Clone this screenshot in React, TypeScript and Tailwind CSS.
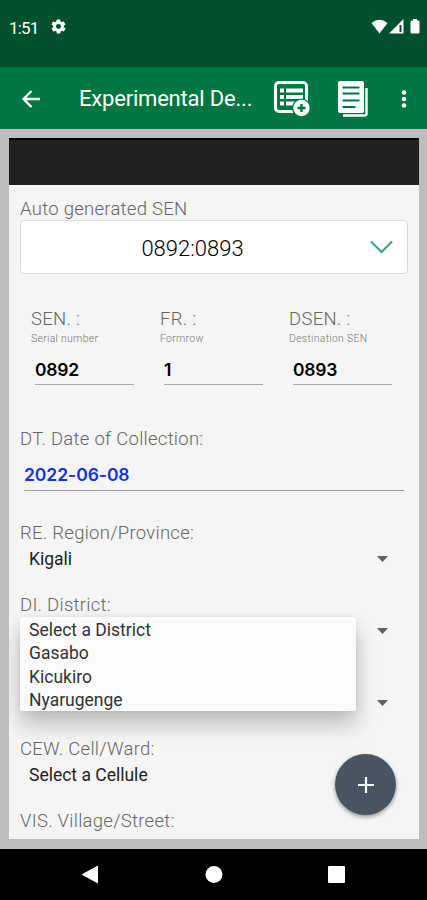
import type { ReactNode } from "react";

const DISTRICTS = ["Select a District", "Gasabo", "Kicukiro", "Nyarugenge"];

const SERIALS = [
  { label: "SEN. :", hint: "Serial number", value: "0892" },
  { label: "FR. :", hint: "Formrow", value: "1" },
  { label: "DSEN. :", hint: "Destination SEN", value: "0893" },
];

function StatusBar() {
  return (
    <div className="flex h-[67px] shrink-0 items-start bg-[#00502b] pl-[9px] pr-[7px] pt-[18px] text-white">
      <span className="h-5 w-[29px] text-[17px] leading-5 tracking-[-0.8px]">1:51</span>
      <svg className="ml-[12px]" width="17" height="17" viewBox="0 0 24 24" fill="currentColor">
        <path d="M19.400 13c0-.3.1-.6.1-1s0-.7-.1-1l2.100-1.600c.2-.2.3-.4.1-.7l-2-3.400c-.1-.2-.4-.3-.6-.2l-2.500 1c-.5-.4-1.100-.7-1.700-1l-.4-2.600c0-.3-.2-.5-.5-.5h-4c-.2 0-.4.2-.5.400l-.4 2.700c-.6.200-1.100.6-1.700 1l-2.500-1c-.2-.1-.5 0-.6.2l-2 3.400c-.1.200-.1.500.1.700L4.600 11c0 .300-.1.600-.1 1s0 .7.1 1l-2.100 1.600c-.2.200-.3.400-.1.700l2 3.400c.1.200.4.300.6.200l2.500-1c.5.400 1.100.7 1.700 1l.4 2.600c0 .300.2.500.5.500h4c.2 0 .5-.2.5-.4l.4-2.700c.6-.2 1.100-.6 1.700-1l2.500 1c.2.100.5 0 .6-.2l2-3.400c.1-.2.1-.5-.1-.7L19.400 13zM12 15.500A3.500 3.500 0 1 1 12 8.500a3.500 3.500 0 0 1 0 7z" />
      </svg>
      <div className="ml-auto mt-[1px] flex items-center">
        <svg width="17" height="15" viewBox="0 0 17 15" fill="currentColor">
          <path d="M.5 4Q8.500-2.500 16.500 4L8.500 14.500z" />
        </svg>
        <svg className="ml-[1px]" width="15" height="15" viewBox="0 0 15 15">
          <path d="M0 14.500 14.500 0v14.500z" fill="currentColor" />
          <path d="M10.500 6h2v7h-2z" fill="#00502b" />
        </svg>
        <svg className="ml-[6px]" width="10" height="15" viewBox="0 0 10 15" fill="currentColor">
          <path d="M3 0h4v1.500h1.500q1 0 1 1v11q0 1-1 1h-7q-1 0-1-1v-11q0-1 1-1H3z" />
        </svg>
      </div>
    </div>
  );
}

function AppBar() {
  return (
    <div className="flex h-[62px] shrink-0 items-center bg-[#007740] pl-[21px] pr-[20px] text-white">
      <svg className="mt-[1px]" width="20" height="20" viewBox="0 0 20 20" fill="none" stroke="currentColor" strokeWidth="2.300">
        <path d="M19 10H3M10.500 2 2.500 10l8 8" />
      </svg>
      <h1 className="ml-[38px] mt-[1px] w-[195px] whitespace-nowrap text-[22px] leading-7 tracking-[-0.2px]">Experimental De...</h1>
      <svg className="mt-[2px]" width="36" height="36" viewBox="0 0 36 36" fill="none">
        <rect x="1.500" y="1.500" width="31" height="29" rx="3.500" stroke="white" strokeWidth="3" />
        <path d="M6 7.500h4v4H6zm6 0h17v4H12zM6 14h4v4H6zm6 0h17v4H12zM6 20.500h4v4H6zm6 0h11v4H12z" fill="white" />
        <circle cx="27.500" cy="27" r="9.500" fill="#007740" />
        <circle cx="27.500" cy="27" r="8.200" fill="white" />
        <path d="M27.500 23v8M23.500 27h8" stroke="#007740" strokeWidth="2.400" />
      </svg>
      <svg className="ml-[28px] mt-[1px]" width="30" height="36" viewBox="0 0 30 36" fill="none">
        <path d="M28.500 7v25.500q0 2-2 2H5" stroke="white" strokeWidth="2.500" />
        <rect width="26" height="32" rx="2" fill="white" />
        <path d="M4.500 6.500h17M4.500 12.500h17M4.500 19.500h17M4.500 26h13" stroke="#007740" strokeWidth="2" />
      </svg>
      <svg className="ml-auto mt-[1px]" width="6" height="20" viewBox="0 0 6 20" fill="currentColor">
        <circle cx="3" cy="3.500" r="2.300" />
        <circle cx="3" cy="10" r="2.300" />
        <circle cx="3" cy="16.500" r="2.300" />
      </svg>
    </div>
  );
}

function Label({ children }: { children: ReactNode }) {
  return <div className="h-6 whitespace-nowrap text-[18.500px] font-light leading-6 tracking-[0.27px] text-[#666]">{children}</div>;
}

function SelectField({ label, value }: { label?: string; value?: string }) {
  return (
    <div className="h-[72px]">
      <Label>{label}</Label>
      <div className="flex h-7 items-center pl-[9px] pr-5">
        <span className="text-[17.500px] text-[#222]">{value}</span>
        <svg className="ml-auto" width="11" height="6" viewBox="0 0 11 6" fill="#606060">
          <path d="M0 0h11L5.500 6z" />
        </svg>
      </div>
    </div>
  );
}

export default function App() {
  return (
    <div className="flex h-[900px] w-[427px] flex-col overflow-hidden font-['Roboto',sans-serif]">
      <StatusBar />
      <AppBar />
      <main className="h-[720px] shrink-0 bg-[#bdbdbd] px-[9px] pb-[10px] pt-[9px]">
        <div className="relative h-[701px] w-[410px] overflow-hidden bg-[#f5f5f5]">
          <div className="h-[47px] border-t-2 border-black bg-[#212121]" />
          <div className="px-[11px] pt-[12px]">
            <Label>Auto generated SEN</Label>
            <div className="-mt-px flex h-[54px] items-center rounded-[4px] border-[1.5px] border-[#dadada] bg-white pr-[14px]">
              <span className="flex-1 pr-[6px] pt-[2px] text-center text-[22px] font-light text-black">0892:0893</span>
              <svg width="23" height="14" viewBox="0 0 23 14" fill="none" stroke="#36a289" strokeWidth="2">
                <path d="M1 1.500 11.500 12 22 1.500" />
              </svg>
            </div>

            <div className="mt-[33px] grid grid-cols-[129px_129px_104px] pl-[11px]">
              {SERIALS.map((s) => (
                <div key={s.hint} className="w-[103px]">
                  <Label>{s.label}</Label>
                  <div className="h-4 whitespace-nowrap text-[10.500px] font-light leading-4 tracking-[0.27px] text-[#777]">{s.hint}</div>
                  <div className="ml-1 mt-2 flex h-[30px] items-center border-b border-[#aaa] pt-[2px] font-['Inter'] text-[17.500px] font-semibold tracking-[-0.2px] text-black">
                    {s.value}
                  </div>
                </div>
              ))}
            </div>

            <div className="mt-[42px]">
              <Label>DT. Date of Collection:</Label>
              <div className="ml-1 mr-1 flex h-[40px] items-center border-b-[1.5px] border-[#999] pt-[10px] font-['Inter'] text-[17.500px] font-semibold tracking-[-0.05px] text-[#1531dc]">
                2022-06-08
              </div>
            </div>

            <div className="mt-[30px]">
              <SelectField label="RE. Region/Province:" value="Kigali" />
              <SelectField label="DI. District:" />
              <SelectField />
              <SelectField label="CEW. Cell/Ward:" value="Select a Cellule" />
              <Label>VIS. Village/Street:</Label>
            </div>
          </div>

          {/* open district menu */}
          <div className="absolute left-[11px] top-[479px] h-[94px] w-[336px] rounded-[2px] bg-[#fbfbfb] pl-[9px] pt-[2px] shadow-[0_13px_22px_0_rgba(0,0,0,0.24),0_0_4px_rgba(0,0,0,0.08)]">
            {DISTRICTS.map((d) => (
              <div key={d} className="h-[23.300px] text-[17.500px] leading-[23.300px] text-[#333]">{d}</div>
            ))}
          </div>

          <button className="absolute left-[326px] top-[616px] flex h-[61px] w-[61px] items-center justify-center rounded-full bg-[#485460] shadow-[0_2px_4px_rgba(0,0,0,0.4)]">
            <svg width="16" height="16" viewBox="0 0 16 16" stroke="white" strokeWidth="2.200">
              <path d="M8 0v16M0 8h16" />
            </svg>
          </button>
        </div>
      </main>
      <nav className="flex h-[51px] items-center bg-black">
        <svg width="427" height="51" viewBox="0 0 427 51" fill="white">
          <path d="M98 16.500v18L81.500 25.500z" />
          <circle cx="214" cy="25.500" r="8.500" />
          <rect x="328" y="17" width="17" height="17" rx="1" />
        </svg>
      </nav>
    </div>
  );
}
